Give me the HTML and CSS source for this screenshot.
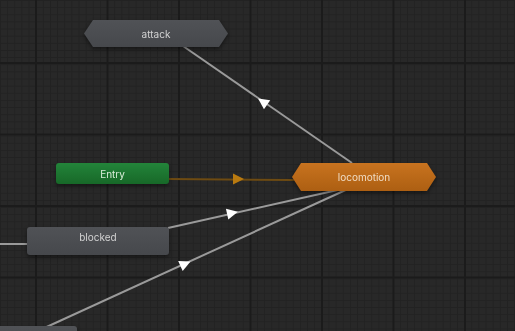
FILE: index.html
```html
<!DOCTYPE html>
<html lang="en">
<head>
    <meta charset="UTF-8">
    <meta name="viewport" content="width=device-width, initial-scale=1.0">
    <title>Animator</title>
    <link rel="stylesheet" href="styles.css">
</head>
<body>
    <div class="graph">
        <!-- transitions -->
        <svg class="links" width="515" height="331" viewBox="0 0 515 331">
            <line x1="183" y1="46" x2="352" y2="163" class="link"/>
            <line x1="0" y1="244" x2="27" y2="244" class="link"/>
            <line x1="168" y1="228" x2="342" y2="189" class="link"/>
            <line x1="40" y1="330" x2="350" y2="188" class="link"/>
            <line x1="169" y1="179" x2="294" y2="180" class="link entry-link"/>

            <polygon points="6,0 -5,-5.5 -5,5.5" class="arrow" transform="translate(263 102) rotate(214.7)"/>
            <polygon points="6,0 -5,-5.5 -5,5.5" class="arrow" transform="translate(232 213) rotate(-12.6)"/>
            <polygon points="6,0 -5,-5.5 -5,5.5" class="arrow" transform="translate(185 264) rotate(-24.4)"/>
            <polygon points="6,0 -5,-5.5 -5,5.5" class="arrow entry-arrow" transform="translate(238 179)"/>
        </svg>

        <!-- states -->
        <div class="node hex gray" style="left:84px;top:20px;width:144px;height:27px"><span>attack</span></div>
        <div class="node rect green" style="left:56px;top:163px;width:113px;height:21px"><span>Entry</span></div>
        <div class="node hex orange" style="left:292px;top:163px;width:144px;height:28px"><span>locomotion</span></div>
        <div class="node rect gray top" style="left:27px;top:227px;width:142px;height:28px"><span>blocked</span></div>
        <div class="node rect gray top" style="left:-20px;top:326px;width:97px;height:28px"><span></span></div>
    </div>
</body>
</html>
```

FILE: styles.css
```css
body {
    margin: 0;
    padding: 0;
    background-color: #282828;
    font-family: Inter, "Noto Sans", sans-serif;
}
.graph {
    position: relative;
    width: 515px;
    height: 331px;
    overflow: hidden;
    background-color: #282828;
    background-image:
        linear-gradient(to right, #1b1b1b 0, #1b1b1b 1.5px, transparent 1.5px),
        linear-gradient(to bottom, #1b1b1b 0, #1b1b1b 1.5px, transparent 1.5px),
        linear-gradient(to right, #222222 0, #222222 1px, transparent 1px),
        linear-gradient(to bottom, #222222 0, #222222 1px, transparent 1px);
    background-size: 71.5px 71.5px, 71.5px 71.5px, 7.15px 7.15px, 7.15px 7.15px;
    background-position: 35px 0, 0 62px, 0 0, 0 0;
}
.links {
    position: absolute;
    left: 0;
    top: 0;
}
.link {
    stroke: #9a9a9a;
    stroke-width: 2;
}
.entry-link {
    stroke: #6e4b12;
}
.arrow {
    fill: #ffffff;
}
.entry-arrow {
    fill: #b97a10;
}
.node {
    position: absolute;
    display: flex;
    align-items: center;
    justify-content: center;
    font-size: 10px;
    color: #d2d2d2;
    filter: drop-shadow(0 2px 2px rgba(0, 0, 0, 0.45));
}
.node.top {
    align-items: flex-start;
    padding-top: 4px;
    box-sizing: border-box;
}
.node span {
    position: relative;
}
.node::before {
    content: "";
    position: absolute;
    inset: 0;
}
.rect::before {
    border-radius: 3px;
}
.hex::before {
    clip-path: polygon(9px 0, calc(100% - 9px) 0, 100% 50%, calc(100% - 9px) 100%, 9px 100%, 0 50%);
}
.gray::before {
    background: linear-gradient(#505256, #46484c);
}
.green::before {
    background: linear-gradient(#23843a, #176828);
}
.green {
    color: #d8ecd8;
}
.orange::before {
    background: linear-gradient(#c8731f, #ad5f12);
}
.orange {
    color: #f0dcc4;
}
```
